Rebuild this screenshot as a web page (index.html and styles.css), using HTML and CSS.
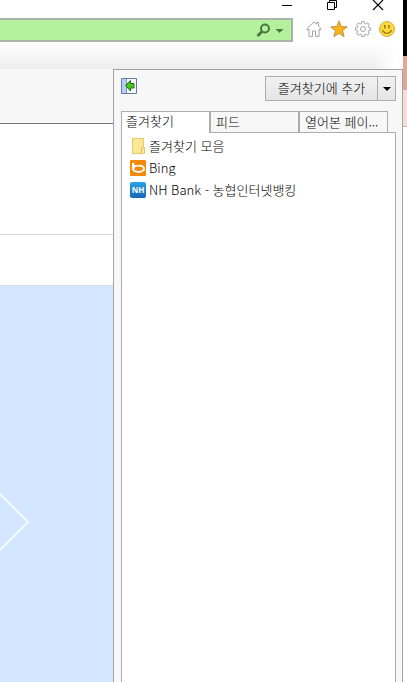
FILE: index.html
```html
<!DOCTYPE html>
<html lang="ko">
<head>
    <meta charset="utf-8">
    <title>즐겨찾기</title>
    <link rel="stylesheet" href="styles.css">
</head>
<body>
    <div class="window">
        <div class="titlebar">
            <button type="button" aria-label="최소화">
                <svg width="12" height="12" viewBox="0 0 12 12"><path d="M2 5.500h10" stroke="#000"/></svg>
            </button>
            <button type="button" aria-label="이전 크기로 복원">
                <svg width="12" height="12" viewBox="0 0 12 12"><path d="M1.500 2.500h7v7h-7zM3.500 2.500v-2h7v7h-2" fill="none" stroke="#000"/></svg>
            </button>
            <button type="button" aria-label="닫기">
                <svg width="12" height="12" viewBox="0 0 12 12"><path d="M1 0l10 10M11 0L1 10" stroke="#000" stroke-width="1.100"/></svg>
            </button>
        </div>

        <div class="toolbar">
            <form class="address">
                <input type="text" aria-label="주소">
                <button type="button" aria-label="검색">
                    <svg width="28" height="16" viewBox="0 0 28 16"><circle cx="9" cy="6.500" r="4" fill="none" stroke="#4c783f" stroke-width="2"/><path d="M6 9.500L1.500 14" stroke="#4c783f" stroke-width="2.800"/><path d="M19.500 7h8l-4 4z" fill="#4c783f"/></svg>
                </button>
            </form>
            <div class="tools">
                <button type="button" aria-label="홈">
                    <svg width="16" height="16" viewBox="0 0 16 16"><path d="M.7 8L8 .8l2.500 2.400V1.500h2v3.700L15.300 8l-1 1-1.300-1v7.400H9.500V10h-3v5.400H3V8L1.700 9z" fill="#fff" stroke="#a0a2a5" stroke-linejoin="round"/></svg>
                </button>
                <button type="button" aria-label="즐겨찾기">
                    <svg width="18" height="18" viewBox="0 0 18 18"><path d="M9 .8l2.200 5.700 6 .4-4.700 3.800 1.600 6L9 13.300l-5.100 3.400 1.600-6L.8 6.900l6-.4z" fill="#fcb415" stroke="#b89248" stroke-linejoin="round"/></svg>
                </button>
                <button type="button" aria-label="도구">
                    <svg width="16" height="16" viewBox="0 0 16 16"><path d="M6.700.6h2.600l.4 2 1.300.5 1.700-1.200 1.600 1.700-1.100 1.700.5 1.300 1.800.3v2.300l-1.800.4-.5 1.300 1.100 1.700-1.600 1.700-1.700-1.200-1.300.5-.4 1.800H6.700l-.4-1.800-1.300-.5-1.700 1.200-1.600-1.700 1.100-1.700-.5-1.300-1.800-.4V6.900l1.800-.3.500-1.300-1.100-1.700 1.600-1.700L5 3.100l1.300-.5z" fill="#fff" stroke="#a0a2a5" stroke-linejoin="round"/><circle cx="8" cy="8" r="2.500" fill="#fff" stroke="#a0a2a5"/></svg>
                </button>
                <button type="button" aria-label="의견 보내기">
                    <svg width="16" height="16" viewBox="0 0 16 16"><circle cx="8" cy="8" r="7.500" fill="#ffd938" stroke="#c9ad50"/><path d="M5.800 4v3.500M10 4v3.500" stroke="#93701c" stroke-width="1.400"/><path d="M3.500 9c1.500 4.300 7.500 4.300 9 0" fill="none" stroke="#93701c" stroke-width="1.200"/></svg>
                </button>
            </div>
        </div>

        <div class="shade"></div>

        <div class="content">
            <div class="page">
                <div class="page-top"></div>
                <div class="page-head"></div>
                <div class="page-menu"></div>
                <div class="page-banner">
                    <svg width="30" height="64" viewBox="0 0 30 64"><path d="M-3 1L28 32L-3 63" fill="none" stroke="#f0faff" stroke-width="2"/></svg>
                </div>
            </div>

            <div class="panel">
                <div class="panel-bar">
                    <button class="pin" type="button" aria-label="즐겨찾기 센터 고정">
                        <svg width="16" height="16" viewBox="0 0 16 16"><path d="M.5.5h15v15H.5z" fill="#f5f9ff" stroke="#627aa5"/><path d="M1 1h4v14H1z" fill="#b5d0f5"/><path d="M5.500 1v14" stroke="#8494ad"/><path d="M4.500 7.500L9.500 2.500v3h3.500v4.500H9.500v3z" fill="#4cc51c" stroke="#187012"/></svg>
                    </button>
                    <div class="split">
                        <button class="add" type="button">즐겨찾기에 추가</button>
                        <button class="more" type="button" aria-label="추가 옵션">
                            <svg width="8" height="4" viewBox="0 0 8 4"><path d="M0 0h8L4 4z"/></svg>
                        </button>
                    </div>
                </div>

                <div class="tabs" role="tablist">
                    <button class="tab active" type="button" role="tab" aria-selected="true">즐겨찾기</button>
                    <button class="tab" type="button" role="tab" aria-selected="false">피드</button>
                    <button class="tab" type="button" role="tab" aria-selected="false">열어본 페이...</button>
                </div>

                <ul class="list">
                    <li><a href="#">
                        <svg width="16" height="16" viewBox="0 0 16 16"><path d="M2.500.5h11v9h1v6h-12z" fill="#fce794" stroke="#e8ca62"/><path d="M11.500 15v-5.500h2" fill="none" stroke="#e0bf50"/></svg>
                        즐겨찾기 모음
                    </a></li>
                    <li><a href="#">
                        <svg width="16" height="16" viewBox="0 0 16 16"><rect width="16" height="16" rx="1" fill="#f28a0c"/><path d="M2 3h2.500v6H2z" fill="#fff"/><ellipse cx="8.500" cy="8.700" rx="5.500" ry="3.200" fill="none" stroke="#fff" stroke-width="2"/><path d="M4.500 3h5v2h-5z" fill="#f28a0c"/></svg>
                        Bing
                    </a></li>
                    <li><a href="#">
                        <span class="nh">NH</span>
                        NH Bank - 농협인터넷뱅킹
                    </a></li>
                </ul>
            </div>
        </div>
    </div>

    <div class="desktop">
        <div class="dark"></div>
        <div class="salmon"></div>
        <div class="pink"></div>
    </div>
</body>
</html>
```
FILE: styles.css
```css
* {
    box-sizing: border-box;
}

body {
    display: flex;
    min-height: 100vh;
    margin: 0;
    background: #fff;
    color: #000;
    font-family: "Noto Sans CJK KR", sans-serif;
    font-size: 13px;
    font-weight: 300;
    line-height: 18px;
}

button,
input {
    margin: 0;
    padding: 0;
    border: 0;
    background: none;
    color: inherit;
    font: inherit;
}

svg {
    display: block;
    flex: none;
}

.window {
    display: flex;
    flex: 1;
    flex-direction: column;
    min-width: 0;
}

.titlebar {
    display: flex;
    justify-content: flex-end;
    gap: 34px;
    height: 18px;
    padding-right: 19px;
}

.titlebar button {
    height: 12px;
}

.toolbar {
    display: flex;
    height: 24px;
}

.address {
    display: flex;
    flex: 1;
    align-items: center;
    padding-right: 7px;
    border: 2px solid #a9b3a6;
    border-left: 0;
    background: #b3f19d;
}

.address input {
    flex: 1;
    min-width: 0;
    height: 20px;
}

.tools {
    display: flex;
    align-items: center;
    justify-content: space-between;
    width: 110px;
    padding: 0 8px 2px 13px;
}

.shade {
    height: 27px;
    margin-right: 8px;
    background: linear-gradient(to right, transparent 94%, #fff), linear-gradient(#fff, #ececec);
}

.content {
    display: flex;
    flex: 1;
}

.page {
    display: flex;
    flex: 1;
    flex-direction: column;
    min-width: 0;
}

.page-top {
    height: 55px;
    border-bottom: 1px solid #757575;
    background: #f7f7f7;
}

.page-head {
    height: 111px;
    border-bottom: 1px solid #d9d9d9;
}

.page-menu {
    height: 51px;
    border-bottom: 1px solid #d9d9d9;
}

.page-banner {
    flex: 1;
    padding-top: 204px;
    background: #d2e6ff;
}

.panel {
    display: flex;
    flex-direction: column;
    width: 290px;
    padding: 6px 6px 0 7px;
    border: 1px solid #9fa1a4;
    border-bottom: 0;
    background: #f7f7f7;
}

.panel-bar {
    display: flex;
    align-items: flex-start;
    justify-content: space-between;
    height: 35px;
}

.pin {
    margin-top: 2px;
}

.split {
    display: flex;
    height: 25px;
    border: 1px solid #acacac;
    background: linear-gradient(#f1f1f1, #e5e5e5);
}

.add {
    width: 112px;
    padding-bottom: 2px;
    border-right: 1px solid #acacac;
}

.more {
    display: flex;
    align-items: center;
    justify-content: center;
    width: 17px;
}

.tabs {
    display: grid;
    grid-template-columns: repeat(3, 1fr);
    height: 21px;
    padding-right: 8px;
}

.tab {
    padding: 0 0 2px 5px;
    border: 1px solid #acacac;
    border-bottom: 0;
    text-align: left;
    white-space: nowrap;
}

.active {
    height: 22px;
    padding: 0 0 3px 4px;
    background: #fff;
    z-index: 1;
}

.list {
    flex: 1;
    margin: 0;
    padding: 2px 8px;
    border: 1px solid #acacac;
    border-bottom: 0;
    background: #fff;
    list-style: none;
}

.list a {
    display: flex;
    align-items: center;
    gap: 3px;
    height: 22px;
    color: inherit;
    text-decoration: none;
}

.nh {
    width: 16px;
    height: 16px;
    border-radius: 2px;
    background: linear-gradient(#27a4e8, #1965b8);
    color: #fff;
    font: bold 8px/16px "Open Sans", sans-serif;
    text-align: center;
}

.desktop {
    width: 4px;
}

.dark {
    height: 56px;
    background: #000;
}

.salmon {
    height: 34px;
    background: #e5a697;
}

.pink {
    height: 37px;
    border-bottom: 1px solid #c5b5b2;
    background: #f8dcd7;
}
```
